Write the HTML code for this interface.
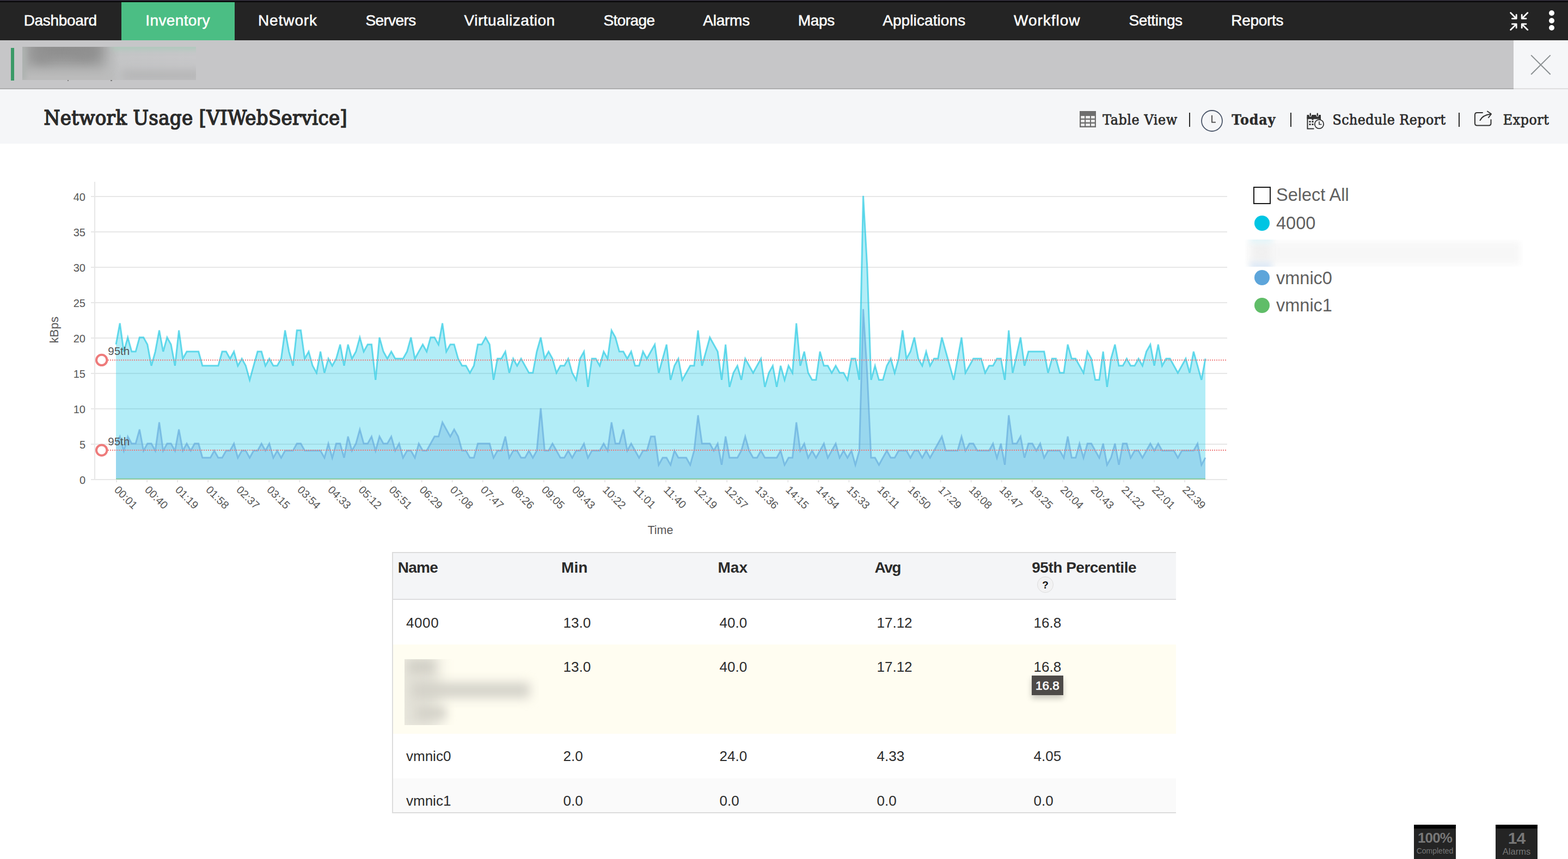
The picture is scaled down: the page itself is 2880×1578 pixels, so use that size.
<!DOCTYPE html>
<html><head><meta charset="utf-8"><title>Network Usage</title>
<style>
html,body{margin:0;padding:0}
body{width:2880px;height:1578px;overflow:hidden;background:#fff;position:relative;font-family:"Liberation Sans",sans-serif;color:#2b2b2b}
.abs{position:absolute}
#strip{left:0;top:0;width:2880px;height:4px;background:linear-gradient(#2c2934 0,#2c2934 55%,#050505 55%)}
#nav{left:0;top:4px;width:2880px;height:70px;background:#242424}
#nav .act{position:absolute;left:223px;top:0;width:208px;height:70px;background:#4bbe84}
#nav span{position:absolute;top:0;line-height:68px;font-size:28px;color:#fff;white-space:nowrap;-webkit-text-stroke:0.5px #fff}
#gbar{left:0;top:74px;width:2780px;height:88px;background:#c6c6c8;border-bottom:2px solid #adadae}
#closep{left:2780px;top:74px;width:100px;height:88px;background:#f5f6f8;border-bottom:2px solid #dededf}
#tbar{left:0;top:164px;width:2880px;height:100px;background:#f5f6f8}
.serif{font-family:"DejaVu Serif Condensed","DejaVu Serif","Liberation Serif",serif}
#title{left:80.5px;top:186px;-webkit-text-stroke:1.5px #2b2b2b;font-size:38px;line-height:60px;white-space:nowrap;color:#2b2b2b;letter-spacing:0.27px}
.tool{top:199.5px;-webkit-text-stroke:0.7px #2b2b2b;font-size:26.5px;line-height:40px;white-space:nowrap;color:#2b2b2b}
.sep{top:207px;width:2px;height:26px;background:#2b2b2b}
.chart{position:absolute;left:0;top:264px}
.leg{font-size:32.5px;color:#606060;line-height:40px;white-space:nowrap}
.dot{width:28px;height:28px;border-radius:50%}
</style></head><body>
<div id="strip" class="abs"></div>
<div id="nav" class="abs"><div class="act"></div>
<span style="left:43.7px;letter-spacing:-0.31px">Dashboard</span>
<span style="left:267.3px;letter-spacing:0.37px">Inventory</span>
<span style="left:474.0px;letter-spacing:0.90px">Network</span>
<span style="left:671.4px;letter-spacing:-0.60px">Servers</span>
<span style="left:852.5px;letter-spacing:0.53px">Virtualization</span>
<span style="left:1108.5px;letter-spacing:-0.58px">Storage</span>
<span style="left:1291.3px;letter-spacing:-0.25px">Alarms</span>
<span style="left:1465.8px;letter-spacing:-0.35px">Maps</span>
<span style="left:1621.2px;letter-spacing:0.09px">Applications</span>
<span style="left:1862.1px;letter-spacing:0.98px">Workflow</span>
<span style="left:2073.4px;letter-spacing:-0.35px">Settings</span>
<span style="left:2261.2px;letter-spacing:-0.27px">Reports</span>
<svg class="abs" style="left:2772px;top:17px" width="36" height="36" viewBox="0 0 36 36" fill="none" stroke="#fff" stroke-width="2.8" stroke-linecap="round" stroke-linejoin="round">
<path d="M2.6,2.6 L13,13 M13.2,6.2 V13.2 H5.4"/><path d="M33.8,2.6 L23.4,13 M23.2,6.2 V13.2 H31"/><path d="M2.6,33.8 L13,23.4 M13.2,30.2 V23.2 H5.4"/><path d="M33.8,33.8 L23.4,23.4 M23.2,30.2 V23.2 H31"/></svg>
<div class="abs" style="left:2845px;top:15.2px;width:10px;height:10px;border-radius:50%;background:#fff"></div>
<div class="abs" style="left:2845px;top:28.9px;width:10px;height:10px;border-radius:50%;background:#fff"></div>
<div class="abs" style="left:2845px;top:42.4px;width:10px;height:10px;border-radius:50%;background:#fff"></div>
</div>
<div id="gbar" class="abs">
 <div class="abs" style="left:20px;top:14px;width:6px;height:60px;background:#3a9a67"></div>
 <div class="abs" style="left:41px;top:12px;width:319px;height:61px;overflow:hidden;background:linear-gradient(90deg,#b0b1b1 0,#b1b2b2 44%,#c4c5c6 56%,#c7c7c9 100%)">
  <div class="abs" style="left:14px;top:-18px;width:132px;height:48px;background:#8d8d8d;filter:blur(14px)"></div>
  <div class="abs" style="left:20px;top:8px;width:30px;height:20px;background:#939393;filter:blur(10px)"></div>
  <div class="abs" style="left:96px;top:2px;width:40px;height:18px;background:#909090;filter:blur(10px)"></div>
  <div class="abs" style="left:-14px;top:46px;width:180px;height:30px;background:#bdbdbd;filter:blur(10px)"></div>
  <div class="abs" style="left:165px;top:-9px;width:175px;height:13px;background:#a9cab9;filter:blur(6px)"></div>
  <div class="abs" style="left:182px;top:43px;width:150px;height:20px;background:#b4b4b5;filter:blur(9px)"></div>
  <div class="abs" style="left:-7px;top:0;width:13px;height:61px;background:#adb3b0;filter:blur(4px)"></div>
 </div>
 <div class="abs" style="left:123.5px;top:73px;width:2.5px;height:1.5px;background:#7d7d7d"></div>
 <div class="abs" style="left:203px;top:73px;width:2.5px;height:1.5px;background:#7d7d7d"></div>
</div>
<div id="closep" class="abs"><svg class="abs" style="left:30px;top:25px" width="40" height="40" viewBox="0 0 40 40"><path d="M2.2,2.4 L37.7,37.7 M37.7,2.4 L2.2,37.7" stroke="#8a8f91" stroke-width="2" fill="none"/></svg></div>
<div id="tbar" class="abs"></div>
<div id="title" class="abs serif">Network Usage [VIWebService]</div>
<div class="abs serif tool" style="left:2025.2px;letter-spacing:0.60px">Table View</div>
<div class="abs serif tool" style="left:2262.3px;font-weight:bold;-webkit-text-stroke:0.4px #2b2b2b;letter-spacing:0.88px">Today</div>
<div class="abs serif tool" style="left:2447.5px;letter-spacing:0.42px">Schedule Report</div>
<div class="abs serif tool" style="left:2760.8px;letter-spacing:0.53px">Export</div>
<div class="abs sep" style="left:2183.5px"></div><div class="abs sep" style="left:2369.7px"></div><div class="abs sep" style="left:2678.9px"></div>
<svg class="abs" style="left:1983px;top:204px" width="30" height="30" viewBox="0 0 30 30"><rect width="30" height="30" fill="#6e6e6e"/><g fill="#eeeeee">
<rect x="2.3" y="9" width="6.8" height="4.6"/><rect x="11.2" y="9" width="7.8" height="4.6"/><rect x="21" y="9" width="6.8" height="4.6"/>
<rect x="2.3" y="16" width="6.8" height="4.6"/><rect x="11.2" y="16" width="7.8" height="4.6"/><rect x="21" y="16" width="6.8" height="4.6"/>
<rect x="2.3" y="23" width="6.8" height="4.6"/><rect x="11.2" y="23" width="7.8" height="4.6"/><rect x="21" y="23" width="6.8" height="4.6"/></g></svg>
<svg class="abs" style="left:2204px;top:199.6px" width="44" height="44" viewBox="0 0 44 44" fill="none"><circle cx="22" cy="22" r="19" stroke="#4b5669" stroke-width="1.8"/><path d="M22,11.7 V24.6 H28.9" stroke="#444" stroke-width="1.8"/></svg>
<svg class="abs" style="left:2399px;top:205px" width="36" height="36" viewBox="0 0 36 36" fill="none">
<path d="M1.5,9 h25.5 v8 h-2 v-3.5 h-21.500 v17 h11 v2 h-13 z" fill="#333"/>
<rect x="1.500" y="6" width="25.500" height="7.500" fill="#333"/>
<rect x="6" y="2" width="3.600" height="7" rx="1.800" fill="#333" stroke="#f5f6f8" stroke-width="1.200"/><rect x="19" y="2" width="3.600" height="7" rx="1.800" fill="#333" stroke="#f5f6f8" stroke-width="1.200"/>
<g fill="#333"><rect x="5.500" y="17" width="3" height="3"/><rect x="10.500" y="17" width="3" height="3"/><rect x="10.500" y="12.500" width="3" height="3"/><rect x="5.500" y="22" width="3" height="3"/><rect x="10.500" y="22" width="3" height="3"/></g>
<circle cx="24" cy="23" r="8.200" fill="#f5f6f8" stroke="#333" stroke-width="1.800"/><path d="M24,18 v5.500 h4.500" stroke="#333" stroke-width="1.600"/></svg>
<svg class="abs" style="left:2706px;top:202px" width="38" height="32" viewBox="0 0 38 32" fill="none" stroke="#333" stroke-width="2" stroke-linecap="round" stroke-linejoin="round">
<path d="M17,5 H7 Q3,5 3,9 V24.500 Q3,28.500 7,28.500 H28.500 Q32.500,28.500 32.500,24.500 V18"/><path d="M12.500,19 Q17,9.500 32,7.500"/><path d="M26,2.500 L33,7.300 L28,14"/></svg>
<svg class="chart" width="2300" height="760" viewBox="0 0 2300 760" font-family="'Liberation Sans', sans-serif">
<rect x="167" y="616" width="2087" height="2" fill="#e7e7e7"/>
<text x="157" y="624.7" text-anchor="end" font-size="20" fill="#575757">0</text>
<rect x="167" y="551" width="2087" height="2" fill="#e7e7e7"/>
<text x="157" y="559.7" text-anchor="end" font-size="20" fill="#575757">5</text>
<rect x="167" y="486" width="2087" height="2" fill="#e7e7e7"/>
<text x="157" y="494.7" text-anchor="end" font-size="20" fill="#575757">10</text>
<rect x="167" y="421" width="2087" height="2" fill="#e7e7e7"/>
<text x="157" y="429.7" text-anchor="end" font-size="20" fill="#575757">15</text>
<rect x="167" y="356" width="2087" height="2" fill="#e7e7e7"/>
<text x="157" y="364.7" text-anchor="end" font-size="20" fill="#575757">20</text>
<rect x="167" y="291" width="2087" height="2" fill="#e7e7e7"/>
<text x="157" y="299.7" text-anchor="end" font-size="20" fill="#575757">25</text>
<rect x="167" y="226" width="2087" height="2" fill="#e7e7e7"/>
<text x="157" y="234.7" text-anchor="end" font-size="20" fill="#575757">30</text>
<rect x="167" y="161" width="2087" height="2" fill="#e7e7e7"/>
<text x="157" y="169.7" text-anchor="end" font-size="20" fill="#575757">35</text>
<rect x="167" y="96" width="2087" height="2" fill="#e7e7e7"/>
<text x="157" y="104.7" text-anchor="end" font-size="20" fill="#575757">40</text>
<rect x="173" y="70" width="2" height="548" fill="#e7e7e7"/>
<rect x="213.0" y="618" width="2" height="4" fill="#e7e7e7"/>
<text transform="translate(208.7,637) rotate(45)" font-size="20" fill="#575757">00:01</text>
<rect x="269.1" y="618" width="2" height="4" fill="#e7e7e7"/>
<text transform="translate(264.8,637) rotate(45)" font-size="20" fill="#575757">00:40</text>
<rect x="325.1" y="618" width="2" height="4" fill="#e7e7e7"/>
<text transform="translate(320.8,637) rotate(45)" font-size="20" fill="#575757">01:19</text>
<rect x="381.2" y="618" width="2" height="4" fill="#e7e7e7"/>
<text transform="translate(376.9,637) rotate(45)" font-size="20" fill="#575757">01:58</text>
<rect x="437.2" y="618" width="2" height="4" fill="#e7e7e7"/>
<text transform="translate(432.9,637) rotate(45)" font-size="20" fill="#575757">02:37</text>
<rect x="493.3" y="618" width="2" height="4" fill="#e7e7e7"/>
<text transform="translate(489.0,637) rotate(45)" font-size="20" fill="#575757">03:15</text>
<rect x="549.4" y="618" width="2" height="4" fill="#e7e7e7"/>
<text transform="translate(545.1,637) rotate(45)" font-size="20" fill="#575757">03:54</text>
<rect x="605.4" y="618" width="2" height="4" fill="#e7e7e7"/>
<text transform="translate(601.1,637) rotate(45)" font-size="20" fill="#575757">04:33</text>
<rect x="661.5" y="618" width="2" height="4" fill="#e7e7e7"/>
<text transform="translate(657.2,637) rotate(45)" font-size="20" fill="#575757">05:12</text>
<rect x="717.5" y="618" width="2" height="4" fill="#e7e7e7"/>
<text transform="translate(713.2,637) rotate(45)" font-size="20" fill="#575757">05:51</text>
<rect x="773.6" y="618" width="2" height="4" fill="#e7e7e7"/>
<text transform="translate(769.3,637) rotate(45)" font-size="20" fill="#575757">06:29</text>
<rect x="829.7" y="618" width="2" height="4" fill="#e7e7e7"/>
<text transform="translate(825.4,637) rotate(45)" font-size="20" fill="#575757">07:08</text>
<rect x="885.7" y="618" width="2" height="4" fill="#e7e7e7"/>
<text transform="translate(881.4,637) rotate(45)" font-size="20" fill="#575757">07:47</text>
<rect x="941.8" y="618" width="2" height="4" fill="#e7e7e7"/>
<text transform="translate(937.5,637) rotate(45)" font-size="20" fill="#575757">08:26</text>
<rect x="997.8" y="618" width="2" height="4" fill="#e7e7e7"/>
<text transform="translate(993.5,637) rotate(45)" font-size="20" fill="#575757">09:05</text>
<rect x="1053.9" y="618" width="2" height="4" fill="#e7e7e7"/>
<text transform="translate(1049.6,637) rotate(45)" font-size="20" fill="#575757">09:43</text>
<rect x="1110.0" y="618" width="2" height="4" fill="#e7e7e7"/>
<text transform="translate(1105.7,637) rotate(45)" font-size="20" fill="#575757">10:22</text>
<rect x="1166.0" y="618" width="2" height="4" fill="#e7e7e7"/>
<text transform="translate(1161.7,637) rotate(45)" font-size="20" fill="#575757">11:01</text>
<rect x="1222.1" y="618" width="2" height="4" fill="#e7e7e7"/>
<text transform="translate(1217.8,637) rotate(45)" font-size="20" fill="#575757">11:40</text>
<rect x="1278.1" y="618" width="2" height="4" fill="#e7e7e7"/>
<text transform="translate(1273.8,637) rotate(45)" font-size="20" fill="#575757">12:19</text>
<rect x="1334.2" y="618" width="2" height="4" fill="#e7e7e7"/>
<text transform="translate(1329.9,637) rotate(45)" font-size="20" fill="#575757">12:57</text>
<rect x="1390.3" y="618" width="2" height="4" fill="#e7e7e7"/>
<text transform="translate(1386.0,637) rotate(45)" font-size="20" fill="#575757">13:36</text>
<rect x="1446.3" y="618" width="2" height="4" fill="#e7e7e7"/>
<text transform="translate(1442.0,637) rotate(45)" font-size="20" fill="#575757">14:15</text>
<rect x="1502.4" y="618" width="2" height="4" fill="#e7e7e7"/>
<text transform="translate(1498.1,637) rotate(45)" font-size="20" fill="#575757">14:54</text>
<rect x="1558.4" y="618" width="2" height="4" fill="#e7e7e7"/>
<text transform="translate(1554.1,637) rotate(45)" font-size="20" fill="#575757">15:33</text>
<rect x="1614.5" y="618" width="2" height="4" fill="#e7e7e7"/>
<text transform="translate(1610.2,637) rotate(45)" font-size="20" fill="#575757">16:11</text>
<rect x="1670.6" y="618" width="2" height="4" fill="#e7e7e7"/>
<text transform="translate(1666.3,637) rotate(45)" font-size="20" fill="#575757">16:50</text>
<rect x="1726.6" y="618" width="2" height="4" fill="#e7e7e7"/>
<text transform="translate(1722.3,637) rotate(45)" font-size="20" fill="#575757">17:29</text>
<rect x="1782.7" y="618" width="2" height="4" fill="#e7e7e7"/>
<text transform="translate(1778.4,637) rotate(45)" font-size="20" fill="#575757">18:08</text>
<rect x="1838.7" y="618" width="2" height="4" fill="#e7e7e7"/>
<text transform="translate(1834.4,637) rotate(45)" font-size="20" fill="#575757">18:47</text>
<rect x="1894.8" y="618" width="2" height="4" fill="#e7e7e7"/>
<text transform="translate(1890.5,637) rotate(45)" font-size="20" fill="#575757">19:25</text>
<rect x="1950.9" y="618" width="2" height="4" fill="#e7e7e7"/>
<text transform="translate(1946.6,637) rotate(45)" font-size="20" fill="#575757">20:04</text>
<rect x="2006.9" y="618" width="2" height="4" fill="#e7e7e7"/>
<text transform="translate(2002.6,637) rotate(45)" font-size="20" fill="#575757">20:43</text>
<rect x="2063.0" y="618" width="2" height="4" fill="#e7e7e7"/>
<text transform="translate(2058.7,637) rotate(45)" font-size="20" fill="#575757">21:22</text>
<rect x="2119.0" y="618" width="2" height="4" fill="#e7e7e7"/>
<text transform="translate(2114.7,637) rotate(45)" font-size="20" fill="#575757">22:01</text>
<rect x="2175.1" y="618" width="2" height="4" fill="#e7e7e7"/>
<text transform="translate(2170.8,637) rotate(45)" font-size="20" fill="#575757">22:39</text>
<path d="M213.0,368.8 L220.2,329.8 L227.4,381.8 L234.7,355.8 L241.9,381.8 L249.1,381.8 L256.3,355.8 L263.6,355.8 L270.8,368.8 L278.0,407.8 L285.2,381.8 L292.5,342.8 L299.7,381.8 L306.9,355.8 L314.1,368.8 L321.4,407.8 L328.6,342.8 L335.8,394.8 L343.0,381.8 L350.3,381.8 L357.5,381.8 L364.7,381.8 L371.9,407.8 L379.1,407.8 L386.4,407.8 L393.6,407.8 L400.8,407.8 L408.0,381.8 L415.3,381.8 L422.5,394.8 L429.7,381.8 L436.9,407.8 L444.2,394.8 L451.4,407.8 L458.6,433.8 L465.8,407.8 L473.1,381.8 L480.3,381.8 L487.5,407.8 L494.7,394.8 L502.0,407.8 L509.2,407.8 L516.4,394.8 L523.6,342.8 L530.8,381.8 L538.1,407.8 L545.3,342.8 L552.5,342.8 L559.7,394.8 L567.0,381.8 L574.2,407.8 L581.4,420.8 L588.6,381.8 L595.9,420.8 L603.1,394.8 L610.3,407.8 L617.5,394.8 L624.8,368.8 L632.0,407.8 L639.2,368.8 L646.4,394.8 L653.7,381.8 L660.9,355.8 L668.1,381.8 L675.3,368.8 L682.5,368.8 L689.8,433.8 L697.0,355.8 L704.2,381.8 L711.4,394.8 L718.7,381.8 L725.9,394.8 L733.1,394.8 L740.3,394.8 L747.6,381.8 L754.8,355.8 L762.0,394.8 L769.2,381.8 L776.5,368.8 L783.7,381.8 L790.9,355.8 L798.1,355.8 L805.4,368.8 L812.6,329.8 L819.8,381.8 L827.0,368.8 L834.2,368.8 L841.5,394.8 L848.7,407.8 L855.9,407.8 L863.1,420.8 L870.4,407.8 L877.6,368.8 L884.8,368.8 L892.0,355.8 L899.3,368.8 L906.5,433.8 L913.7,394.8 L920.9,394.8 L928.2,381.8 L935.4,420.8 L942.6,394.8 L949.8,407.8 L957.1,394.8 L964.3,407.8 L971.5,420.8 L978.7,420.8 L985.9,381.8 L993.2,355.8 L1000.4,394.8 L1007.6,381.8 L1014.8,394.8 L1022.1,420.8 L1029.3,407.8 L1036.5,407.8 L1043.7,394.8 L1051.0,420.8 L1058.2,433.8 L1065.4,394.8 L1072.6,381.8 L1079.9,446.8 L1087.1,394.8 L1094.3,394.8 L1101.5,407.8 L1108.8,381.8 L1116.0,394.8 L1123.2,342.8 L1130.4,355.8 L1137.6,381.8 L1144.9,381.8 L1152.1,394.8 L1159.3,381.8 L1166.5,407.8 L1173.8,407.8 L1181.0,381.8 L1188.2,394.8 L1195.4,381.8 L1202.7,368.8 L1209.9,420.8 L1217.1,394.8 L1224.3,368.8 L1231.6,433.8 L1238.8,407.8 L1246.0,394.8 L1253.2,433.8 L1260.5,420.8 L1267.7,407.8 L1274.9,407.8 L1282.1,342.8 L1289.4,407.8 L1296.6,381.8 L1303.8,355.8 L1311.0,368.8 L1318.2,381.8 L1325.5,433.8 L1332.7,368.8 L1339.9,446.8 L1347.1,420.8 L1354.4,407.8 L1361.6,433.8 L1368.8,394.8 L1376.0,407.8 L1383.3,420.8 L1390.5,407.8 L1397.7,394.8 L1404.9,446.8 L1412.2,420.8 L1419.4,407.8 L1426.6,446.8 L1433.8,407.8 L1441.1,433.8 L1448.3,407.8 L1455.5,420.8 L1462.7,329.8 L1469.9,407.8 L1477.2,381.8 L1484.4,420.8 L1491.6,433.8 L1498.8,433.8 L1506.1,381.8 L1513.3,407.8 L1520.5,407.8 L1527.7,420.8 L1535.0,407.8 L1542.2,420.8 L1549.4,420.8 L1556.6,433.8 L1563.9,394.8 L1571.1,394.8 L1578.3,433.8 L1585.5,95.8 L1592.8,225.8 L1600.0,433.8 L1607.2,407.8 L1614.4,433.8 L1621.6,433.8 L1628.9,407.8 L1636.1,394.8 L1643.3,420.8 L1650.5,394.8 L1657.8,342.8 L1665.0,394.8 L1672.2,381.8 L1679.4,355.8 L1686.7,394.8 L1693.9,407.8 L1701.1,381.8 L1708.3,407.8 L1715.6,394.8 L1722.8,394.8 L1730.0,355.8 L1737.2,381.8 L1744.5,407.8 L1751.7,433.8 L1758.9,394.8 L1766.1,355.8 L1773.3,420.8 L1780.6,407.8 L1787.8,394.8 L1795.0,394.8 L1802.2,394.8 L1809.5,420.8 L1816.7,407.8 L1823.9,407.8 L1831.1,394.8 L1838.4,394.8 L1845.6,433.8 L1852.8,342.8 L1860.0,420.8 L1867.3,388.3 L1874.5,355.8 L1881.7,407.8 L1888.9,381.8 L1896.2,381.8 L1903.4,381.8 L1910.6,381.8 L1917.8,381.8 L1925.0,420.8 L1932.3,394.8 L1939.5,394.8 L1946.7,420.8 L1953.9,420.8 L1961.2,368.8 L1968.4,394.8 L1975.6,394.8 L1982.8,407.8 L1990.1,420.8 L1997.3,381.8 L2004.5,394.8 L2011.7,433.8 L2019.0,433.8 L2026.2,381.8 L2033.4,446.8 L2040.6,394.8 L2047.9,368.8 L2055.1,407.8 L2062.3,407.8 L2069.5,394.8 L2076.7,407.8 L2084.0,407.8 L2091.2,394.8 L2098.4,407.8 L2105.6,381.8 L2112.9,368.8 L2120.1,407.8 L2127.3,368.8 L2134.5,407.8 L2141.8,394.8 L2149.0,394.8 L2156.2,407.8 L2163.4,420.8 L2170.7,407.8 L2177.9,394.8 L2185.1,420.8 L2192.3,381.8 L2199.6,407.8 L2206.8,433.8 L2214.0,394.8 L2214.0,615.8 L213.0,615.8 Z" fill="#00c5e3" fill-opacity="0.3"/>
<path d="M213.0,368.8 L220.2,329.8 L227.4,381.8 L234.7,355.8 L241.9,381.8 L249.1,381.8 L256.3,355.8 L263.6,355.8 L270.8,368.8 L278.0,407.8 L285.2,381.8 L292.5,342.8 L299.7,381.8 L306.9,355.8 L314.1,368.8 L321.4,407.8 L328.6,342.8 L335.8,394.8 L343.0,381.8 L350.3,381.8 L357.5,381.8 L364.7,381.8 L371.9,407.8 L379.1,407.8 L386.4,407.8 L393.6,407.8 L400.8,407.8 L408.0,381.8 L415.3,381.8 L422.5,394.8 L429.7,381.8 L436.9,407.8 L444.2,394.8 L451.4,407.8 L458.6,433.8 L465.8,407.8 L473.1,381.8 L480.3,381.8 L487.5,407.8 L494.7,394.8 L502.0,407.8 L509.2,407.8 L516.4,394.8 L523.6,342.8 L530.8,381.8 L538.1,407.8 L545.3,342.8 L552.5,342.8 L559.7,394.8 L567.0,381.8 L574.2,407.8 L581.4,420.8 L588.6,381.8 L595.9,420.8 L603.1,394.8 L610.3,407.8 L617.5,394.8 L624.8,368.8 L632.0,407.8 L639.2,368.8 L646.4,394.8 L653.7,381.8 L660.9,355.8 L668.1,381.8 L675.3,368.8 L682.5,368.8 L689.8,433.8 L697.0,355.8 L704.2,381.8 L711.4,394.8 L718.7,381.8 L725.9,394.8 L733.1,394.8 L740.3,394.8 L747.6,381.8 L754.8,355.8 L762.0,394.8 L769.2,381.8 L776.5,368.8 L783.7,381.8 L790.9,355.8 L798.1,355.8 L805.4,368.8 L812.6,329.8 L819.8,381.8 L827.0,368.8 L834.2,368.8 L841.5,394.8 L848.7,407.8 L855.9,407.8 L863.1,420.8 L870.4,407.8 L877.6,368.8 L884.8,368.8 L892.0,355.8 L899.3,368.8 L906.5,433.8 L913.7,394.8 L920.9,394.8 L928.2,381.8 L935.4,420.8 L942.6,394.8 L949.8,407.8 L957.1,394.8 L964.3,407.8 L971.5,420.8 L978.7,420.8 L985.9,381.8 L993.2,355.8 L1000.4,394.8 L1007.6,381.8 L1014.8,394.8 L1022.1,420.8 L1029.3,407.8 L1036.5,407.8 L1043.7,394.8 L1051.0,420.8 L1058.2,433.8 L1065.4,394.8 L1072.6,381.8 L1079.9,446.8 L1087.1,394.8 L1094.3,394.8 L1101.5,407.8 L1108.8,381.8 L1116.0,394.8 L1123.2,342.8 L1130.4,355.8 L1137.6,381.8 L1144.9,381.8 L1152.1,394.8 L1159.3,381.8 L1166.5,407.8 L1173.8,407.8 L1181.0,381.8 L1188.2,394.8 L1195.4,381.8 L1202.7,368.8 L1209.9,420.8 L1217.1,394.8 L1224.3,368.8 L1231.6,433.8 L1238.8,407.8 L1246.0,394.8 L1253.2,433.8 L1260.5,420.8 L1267.7,407.8 L1274.9,407.8 L1282.1,342.8 L1289.4,407.8 L1296.6,381.8 L1303.8,355.8 L1311.0,368.8 L1318.2,381.8 L1325.5,433.8 L1332.7,368.8 L1339.9,446.8 L1347.1,420.8 L1354.4,407.8 L1361.6,433.8 L1368.8,394.8 L1376.0,407.8 L1383.3,420.8 L1390.5,407.8 L1397.7,394.8 L1404.9,446.8 L1412.2,420.8 L1419.4,407.8 L1426.6,446.8 L1433.8,407.8 L1441.1,433.8 L1448.3,407.8 L1455.5,420.8 L1462.7,329.8 L1469.9,407.8 L1477.2,381.8 L1484.4,420.8 L1491.6,433.8 L1498.8,433.8 L1506.1,381.8 L1513.3,407.8 L1520.5,407.8 L1527.7,420.8 L1535.0,407.8 L1542.2,420.8 L1549.4,420.8 L1556.6,433.8 L1563.9,394.8 L1571.1,394.8 L1578.3,433.8 L1585.5,95.8 L1592.8,225.8 L1600.0,433.8 L1607.2,407.8 L1614.4,433.8 L1621.6,433.8 L1628.9,407.8 L1636.1,394.8 L1643.3,420.8 L1650.5,394.8 L1657.8,342.8 L1665.0,394.8 L1672.2,381.8 L1679.4,355.8 L1686.7,394.8 L1693.9,407.8 L1701.1,381.8 L1708.3,407.8 L1715.6,394.8 L1722.8,394.8 L1730.0,355.8 L1737.2,381.8 L1744.5,407.8 L1751.7,433.8 L1758.9,394.8 L1766.1,355.8 L1773.3,420.8 L1780.6,407.8 L1787.8,394.8 L1795.0,394.8 L1802.2,394.8 L1809.5,420.8 L1816.7,407.8 L1823.9,407.8 L1831.1,394.8 L1838.4,394.8 L1845.6,433.8 L1852.8,342.8 L1860.0,420.8 L1867.3,388.3 L1874.5,355.8 L1881.7,407.8 L1888.9,381.8 L1896.2,381.8 L1903.4,381.8 L1910.6,381.8 L1917.8,381.8 L1925.0,420.8 L1932.3,394.8 L1939.5,394.8 L1946.7,420.8 L1953.9,420.8 L1961.2,368.8 L1968.4,394.8 L1975.6,394.8 L1982.8,407.8 L1990.1,420.8 L1997.3,381.8 L2004.5,394.8 L2011.7,433.8 L2019.0,433.8 L2026.2,381.8 L2033.4,446.8 L2040.6,394.8 L2047.9,368.8 L2055.1,407.8 L2062.3,407.8 L2069.5,394.8 L2076.7,407.8 L2084.0,407.8 L2091.2,394.8 L2098.4,407.8 L2105.6,381.8 L2112.9,368.8 L2120.1,407.8 L2127.3,368.8 L2134.5,407.8 L2141.8,394.8 L2149.0,394.8 L2156.2,407.8 L2163.4,420.8 L2170.7,407.8 L2177.9,394.8 L2185.1,420.8 L2192.3,381.8 L2199.6,407.8 L2206.8,433.8 L2214.0,394.8" fill="none" stroke="#22c9e2" stroke-opacity="0.66" stroke-width="3"/>
<path d="M213.0,550.8 L220.2,537.8 L227.4,563.8 L234.7,537.8 L241.9,550.8 L249.1,550.8 L256.3,524.8 L263.6,563.8 L270.8,550.8 L278.0,550.8 L285.2,563.8 L292.5,511.8 L299.7,563.8 L306.9,550.8 L314.1,550.8 L321.4,563.8 L328.6,524.8 L335.8,563.8 L343.0,550.8 L350.3,563.8 L357.5,550.8 L364.7,550.8 L371.9,576.8 L379.1,576.8 L386.4,576.8 L393.6,563.8 L400.8,576.8 L408.0,576.8 L415.3,563.8 L422.5,563.8 L429.7,550.8 L436.9,576.8 L444.2,563.8 L451.4,563.8 L458.6,576.8 L465.8,563.8 L473.1,563.8 L480.3,550.8 L487.5,563.8 L494.7,550.8 L502.0,576.8 L509.2,563.8 L516.4,576.8 L523.6,563.8 L530.8,563.8 L538.1,563.8 L545.3,550.8 L552.5,550.8 L559.7,563.8 L567.0,563.8 L574.2,563.8 L581.4,563.8 L588.6,563.8 L595.9,576.8 L603.1,550.8 L610.3,576.8 L617.5,550.8 L624.8,550.8 L632.0,576.8 L639.2,537.8 L646.4,563.8 L653.7,550.8 L660.9,524.8 L668.1,550.8 L675.3,550.8 L682.5,537.8 L689.8,563.8 L697.0,537.8 L704.2,550.8 L711.4,550.8 L718.7,537.8 L725.9,563.8 L733.1,550.8 L740.3,576.8 L747.6,563.8 L754.8,563.8 L762.0,576.8 L769.2,550.8 L776.5,563.8 L783.7,563.8 L790.9,550.8 L798.1,537.8 L805.4,537.8 L812.6,511.8 L819.8,524.8 L827.0,537.8 L834.2,524.8 L841.5,537.8 L848.7,563.8 L855.9,563.8 L863.1,576.8 L870.4,576.8 L877.6,550.8 L884.8,550.8 L892.0,550.8 L899.3,550.8 L906.5,576.8 L913.7,563.8 L920.9,563.8 L928.2,537.8 L935.4,576.8 L942.6,563.8 L949.8,563.8 L957.1,576.8 L964.3,576.8 L971.5,563.8 L978.7,576.8 L985.9,563.8 L993.2,485.8 L1000.4,563.8 L1007.6,563.8 L1014.8,550.8 L1022.1,563.8 L1029.3,576.8 L1036.5,576.8 L1043.7,563.8 L1051.0,576.8 L1058.2,563.8 L1065.4,563.8 L1072.6,550.8 L1079.9,576.8 L1087.1,563.8 L1094.3,563.8 L1101.5,563.8 L1108.8,550.8 L1116.0,563.8 L1123.2,511.8 L1130.4,550.8 L1137.6,550.8 L1144.9,524.8 L1152.1,563.8 L1159.3,550.8 L1166.5,563.8 L1173.8,576.8 L1181.0,563.8 L1188.2,563.8 L1195.4,537.8 L1202.7,537.8 L1209.9,589.8 L1217.1,576.8 L1224.3,576.8 L1231.6,589.8 L1238.8,563.8 L1246.0,576.8 L1253.2,576.8 L1260.5,576.8 L1267.7,589.8 L1274.9,563.8 L1282.1,498.8 L1289.4,550.8 L1296.6,550.8 L1303.8,550.8 L1311.0,563.8 L1318.2,550.8 L1325.5,589.8 L1332.7,537.8 L1339.9,576.8 L1347.1,576.8 L1354.4,576.8 L1361.6,563.8 L1368.8,537.8 L1376.0,563.8 L1383.3,576.8 L1390.5,576.8 L1397.7,563.8 L1404.9,576.8 L1412.2,576.8 L1419.4,576.8 L1426.6,576.8 L1433.8,563.8 L1441.1,589.8 L1448.3,576.8 L1455.5,576.8 L1462.7,511.8 L1469.9,563.8 L1477.2,550.8 L1484.4,576.8 L1491.6,563.8 L1498.8,576.8 L1506.1,563.8 L1513.3,550.8 L1520.5,576.8 L1527.7,563.8 L1535.0,550.8 L1542.2,576.8 L1549.4,563.8 L1556.6,576.8 L1563.9,563.8 L1571.1,589.8 L1578.3,563.8 L1585.5,303.8 L1592.8,420.8 L1600.0,576.8 L1607.2,576.8 L1614.4,589.8 L1621.6,576.8 L1628.9,563.8 L1636.1,576.8 L1643.3,576.8 L1650.5,563.8 L1657.8,563.8 L1665.0,563.8 L1672.2,576.8 L1679.4,563.8 L1686.7,563.8 L1693.9,576.8 L1701.1,563.8 L1708.3,576.8 L1715.6,563.8 L1722.8,550.8 L1730.0,537.8 L1737.2,563.8 L1744.5,563.8 L1751.7,563.8 L1758.9,563.8 L1766.1,537.8 L1773.3,563.8 L1780.6,550.8 L1787.8,550.8 L1795.0,563.8 L1802.2,563.8 L1809.5,563.8 L1816.7,563.8 L1823.9,550.8 L1831.1,576.8 L1838.4,550.8 L1845.6,589.8 L1852.8,498.8 L1860.0,550.8 L1867.3,550.8 L1874.5,537.8 L1881.7,576.8 L1888.9,550.8 L1896.2,550.8 L1903.4,563.8 L1910.6,550.8 L1917.8,576.8 L1925.0,563.8 L1932.3,563.8 L1939.5,563.8 L1946.7,563.8 L1953.9,576.8 L1961.2,537.8 L1968.4,576.8 L1975.6,576.8 L1982.8,550.8 L1990.1,576.8 L1997.3,550.8 L2004.5,550.8 L2011.7,563.8 L2019.0,576.8 L2026.2,550.8 L2033.4,589.8 L2040.6,576.8 L2047.9,550.8 L2055.1,589.8 L2062.3,550.8 L2069.5,550.8 L2076.7,576.8 L2084.0,563.8 L2091.2,563.8 L2098.4,576.8 L2105.6,563.8 L2112.9,550.8 L2120.1,563.8 L2127.3,550.8 L2134.5,563.8 L2141.8,563.8 L2149.0,563.8 L2156.2,563.8 L2163.4,576.8 L2170.7,563.8 L2177.9,563.8 L2185.1,563.8 L2192.3,563.8 L2199.6,550.8 L2206.8,589.8 L2214.0,576.8 L2214.0,615.8 L213.0,615.8 Z" fill="#5da5da" fill-opacity="0.3"/>
<path d="M213.0,550.8 L220.2,537.8 L227.4,563.8 L234.7,537.8 L241.9,550.8 L249.1,550.8 L256.3,524.8 L263.6,563.8 L270.8,550.8 L278.0,550.8 L285.2,563.8 L292.5,511.8 L299.7,563.8 L306.9,550.8 L314.1,550.8 L321.4,563.8 L328.6,524.8 L335.8,563.8 L343.0,550.8 L350.3,563.8 L357.5,550.8 L364.7,550.8 L371.9,576.8 L379.1,576.8 L386.4,576.8 L393.6,563.8 L400.8,576.8 L408.0,576.8 L415.3,563.8 L422.5,563.8 L429.7,550.8 L436.9,576.8 L444.2,563.8 L451.4,563.8 L458.6,576.8 L465.8,563.8 L473.1,563.8 L480.3,550.8 L487.5,563.8 L494.7,550.8 L502.0,576.8 L509.2,563.8 L516.4,576.8 L523.6,563.8 L530.8,563.8 L538.1,563.8 L545.3,550.8 L552.5,550.8 L559.7,563.8 L567.0,563.8 L574.2,563.8 L581.4,563.8 L588.6,563.8 L595.9,576.8 L603.1,550.8 L610.3,576.8 L617.5,550.8 L624.8,550.8 L632.0,576.8 L639.2,537.8 L646.4,563.8 L653.7,550.8 L660.9,524.8 L668.1,550.8 L675.3,550.8 L682.5,537.8 L689.8,563.8 L697.0,537.8 L704.2,550.8 L711.4,550.8 L718.7,537.8 L725.9,563.8 L733.1,550.8 L740.3,576.8 L747.6,563.8 L754.8,563.8 L762.0,576.8 L769.2,550.8 L776.5,563.8 L783.7,563.8 L790.9,550.8 L798.1,537.8 L805.4,537.8 L812.6,511.8 L819.8,524.8 L827.0,537.8 L834.2,524.8 L841.5,537.8 L848.7,563.8 L855.9,563.8 L863.1,576.8 L870.4,576.8 L877.6,550.8 L884.8,550.8 L892.0,550.8 L899.3,550.8 L906.5,576.8 L913.7,563.8 L920.9,563.8 L928.2,537.8 L935.4,576.8 L942.6,563.8 L949.8,563.8 L957.1,576.8 L964.3,576.8 L971.5,563.8 L978.7,576.8 L985.9,563.8 L993.2,485.8 L1000.4,563.8 L1007.6,563.8 L1014.8,550.8 L1022.1,563.8 L1029.3,576.8 L1036.5,576.8 L1043.7,563.8 L1051.0,576.8 L1058.2,563.8 L1065.4,563.8 L1072.6,550.8 L1079.9,576.8 L1087.1,563.8 L1094.3,563.8 L1101.5,563.8 L1108.8,550.8 L1116.0,563.8 L1123.2,511.8 L1130.4,550.8 L1137.6,550.8 L1144.9,524.8 L1152.1,563.8 L1159.3,550.8 L1166.5,563.8 L1173.8,576.8 L1181.0,563.8 L1188.2,563.8 L1195.4,537.8 L1202.7,537.8 L1209.9,589.8 L1217.1,576.8 L1224.3,576.8 L1231.6,589.8 L1238.8,563.8 L1246.0,576.8 L1253.2,576.8 L1260.5,576.8 L1267.7,589.8 L1274.9,563.8 L1282.1,498.8 L1289.4,550.8 L1296.6,550.8 L1303.8,550.8 L1311.0,563.8 L1318.2,550.8 L1325.5,589.8 L1332.7,537.8 L1339.9,576.8 L1347.1,576.8 L1354.4,576.8 L1361.6,563.8 L1368.8,537.8 L1376.0,563.8 L1383.3,576.8 L1390.5,576.8 L1397.7,563.8 L1404.9,576.8 L1412.2,576.8 L1419.4,576.8 L1426.6,576.8 L1433.8,563.8 L1441.1,589.8 L1448.3,576.8 L1455.5,576.8 L1462.7,511.8 L1469.9,563.8 L1477.2,550.8 L1484.4,576.8 L1491.6,563.8 L1498.8,576.8 L1506.1,563.8 L1513.3,550.8 L1520.5,576.8 L1527.7,563.8 L1535.0,550.8 L1542.2,576.8 L1549.4,563.8 L1556.6,576.8 L1563.9,563.8 L1571.1,589.8 L1578.3,563.8 L1585.5,303.8 L1592.8,420.8 L1600.0,576.8 L1607.2,576.8 L1614.4,589.8 L1621.6,576.8 L1628.9,563.8 L1636.1,576.8 L1643.3,576.8 L1650.5,563.8 L1657.8,563.8 L1665.0,563.8 L1672.2,576.8 L1679.4,563.8 L1686.7,563.8 L1693.9,576.8 L1701.1,563.8 L1708.3,576.8 L1715.6,563.8 L1722.8,550.8 L1730.0,537.8 L1737.2,563.8 L1744.5,563.8 L1751.7,563.8 L1758.9,563.8 L1766.1,537.8 L1773.3,563.8 L1780.6,550.8 L1787.8,550.8 L1795.0,563.8 L1802.2,563.8 L1809.5,563.8 L1816.7,563.8 L1823.9,550.8 L1831.1,576.8 L1838.4,550.8 L1845.6,589.8 L1852.8,498.8 L1860.0,550.8 L1867.3,550.8 L1874.5,537.8 L1881.7,576.8 L1888.9,550.8 L1896.2,550.8 L1903.4,563.8 L1910.6,550.8 L1917.8,576.8 L1925.0,563.8 L1932.3,563.8 L1939.5,563.8 L1946.7,563.8 L1953.9,576.8 L1961.2,537.8 L1968.4,576.8 L1975.6,576.8 L1982.8,550.8 L1990.1,576.8 L1997.3,550.8 L2004.5,550.8 L2011.7,563.8 L2019.0,576.8 L2026.2,550.8 L2033.4,589.8 L2040.6,576.8 L2047.9,550.8 L2055.1,589.8 L2062.3,550.8 L2069.5,550.8 L2076.7,576.8 L2084.0,563.8 L2091.2,563.8 L2098.4,576.8 L2105.6,563.8 L2112.9,550.8 L2120.1,563.8 L2127.3,550.8 L2134.5,563.8 L2141.8,563.8 L2149.0,563.8 L2156.2,563.8 L2163.4,576.8 L2170.7,563.8 L2177.9,563.8 L2185.1,563.8 L2192.3,563.8 L2199.6,550.8 L2206.8,589.8 L2214.0,576.8" fill="none" stroke="#5da5da" stroke-opacity="0.6" stroke-width="3"/>
<path d="M213.0,615.8 L2214.0,615.8" stroke="#60bd68" stroke-opacity="0.6" stroke-width="2" fill="none"/>
<path d="M198,397.4 L2253,397.4" stroke="#ef7a7a" stroke-width="2" stroke-dasharray="2 2" fill="none"/>
<circle cx="186.7" cy="397.4" r="9.7" fill="#fff" stroke="#ee7b7b" stroke-width="4"/>
<text x="198.3" y="387.8" font-size="20.5" fill="#555">95th</text>
<path d="M198,563.1 L2253,563.1" stroke="#ef7a7a" stroke-width="2" stroke-dasharray="2 2" fill="none"/>
<circle cx="186.7" cy="563.1" r="9.7" fill="#fff" stroke="#ee7b7b" stroke-width="4"/>
<text x="198.3" y="553.5" font-size="20.5" fill="#555">95th</text>
<text x="1213" y="716.5" text-anchor="middle" font-size="21.5" fill="#575757">Time</text>
<text transform="translate(107,342) rotate(-90)" text-anchor="middle" font-size="22" fill="#575757">kBps</text>
</svg>
<div class="abs" style="left:2302px;top:343px;width:28px;height:28px;border:2px solid #1a1a1a;background:#fff"></div>
<div class="abs leg" style="left:2344px;top:338px">Select All</div>
<div class="abs dot" style="left:2304px;top:396px;background:#00c5e3"></div>
<div class="abs leg" style="left:2344px;top:389.7px">4000</div>
<div class="abs" style="left:2286px;top:440px;width:512px;height:50px;overflow:hidden">
 <div class="abs" style="left:6px;top:4px;width:500px;height:42px;background:#f7f7f7;filter:blur(6px)"></div>
 <div class="abs" style="left:16px;top:8px;width:30px;height:30px;background:#efefef;filter:blur(8px)"></div>
 <div class="abs" style="left:10px;top:-8px;width:40px;height:14px;background:#dff3f8;filter:blur(6px)"></div>
 <div class="abs" style="left:10px;top:42px;width:40px;height:14px;background:#d9e6f4;filter:blur(6px)"></div>
</div>
<div class="abs dot" style="left:2304px;top:496px;background:#5da5da"></div>
<div class="abs leg" style="left:2344px;top:491px">vmnic0</div>
<div class="abs dot" style="left:2304px;top:547px;background:#60bd68"></div>
<div class="abs leg" style="left:2344px;top:541px">vmnic1</div>
<div class="abs" style="left:720px;top:1014px;width:1440px;height:476px;border-left:2px solid #dcdcdc;border-top:2px solid #dcdcdc;border-bottom:2px solid #dcdcdc;box-sizing:content-box;overflow:hidden;width:1438px">
<div class="abs" style="left:0;top:0;width:1438px;height:84px;background:#f4f5f7;border-bottom:2px solid #dddddf"></div>
<div class="abs" style="left:0;top:168px;width:1438px;height:164px;background:#fffdf1"></div>
<div class="abs" style="left:0;top:414px;width:1438px;height:70px;background:#fafafa"></div>
</div>
<div class="abs" style="left:730.7px;top:1023px;line-height:40px;font-size:28px;font-weight:bold;color:#2b2b2b;white-space:nowrap;letter-spacing:-0.74px">Name</div>
<div class="abs" style="left:1031px;top:1023px;line-height:40px;font-size:28px;font-weight:bold;color:#2b2b2b;white-space:nowrap;letter-spacing:0.09px">Min</div>
<div class="abs" style="left:1318.5px;top:1023px;line-height:40px;font-size:28px;font-weight:bold;color:#2b2b2b;white-space:nowrap;letter-spacing:0.01px">Max</div>
<div class="abs" style="left:1606.6px;top:1023px;line-height:40px;font-size:28px;font-weight:bold;color:#2b2b2b;white-space:nowrap;letter-spacing:-1.49px">Avg</div>
<div class="abs" style="left:1895.3px;top:1023px;line-height:40px;font-size:28px;font-weight:bold;color:#2b2b2b;white-space:nowrap;letter-spacing:-0.50px">95th Percentile</div>
<div class="abs" style="left:746px;top:1124px;line-height:40px;font-size:26px;color:#2b2b2b;white-space:nowrap;letter-spacing:0.60px">4000</div>
<div class="abs" style="left:1034.5px;top:1124px;line-height:40px;font-size:26px;color:#2b2b2b;white-space:nowrap;letter-spacing:0.00px">13.0</div>
<div class="abs" style="left:1321.5px;top:1124px;line-height:40px;font-size:26px;color:#2b2b2b;white-space:nowrap;letter-spacing:0.00px">40.0</div>
<div class="abs" style="left:1610.5px;top:1124px;line-height:40px;font-size:26px;color:#2b2b2b;white-space:nowrap;letter-spacing:0.00px">17.12</div>
<div class="abs" style="left:1898.6px;top:1124px;line-height:40px;font-size:26px;color:#2b2b2b;white-space:nowrap;letter-spacing:0.00px">16.8</div>
<div class="abs" style="left:1034.5px;top:1205px;line-height:40px;font-size:26px;color:#2b2b2b;white-space:nowrap;letter-spacing:0.00px">13.0</div>
<div class="abs" style="left:1321.5px;top:1205px;line-height:40px;font-size:26px;color:#2b2b2b;white-space:nowrap;letter-spacing:0.00px">40.0</div>
<div class="abs" style="left:1610.5px;top:1205px;line-height:40px;font-size:26px;color:#2b2b2b;white-space:nowrap;letter-spacing:0.00px">17.12</div>
<div class="abs" style="left:1898.6px;top:1205px;line-height:40px;font-size:26px;color:#2b2b2b;white-space:nowrap;letter-spacing:0.00px">16.8</div>
<div class="abs" style="left:746px;top:1369px;line-height:40px;font-size:26px;color:#2b2b2b;white-space:nowrap;letter-spacing:0.00px">vmnic0</div>
<div class="abs" style="left:1034.5px;top:1369px;line-height:40px;font-size:26px;color:#2b2b2b;white-space:nowrap;letter-spacing:0.00px">2.0</div>
<div class="abs" style="left:1321.5px;top:1369px;line-height:40px;font-size:26px;color:#2b2b2b;white-space:nowrap;letter-spacing:0.00px">24.0</div>
<div class="abs" style="left:1610.5px;top:1369px;line-height:40px;font-size:26px;color:#2b2b2b;white-space:nowrap;letter-spacing:0.00px">4.33</div>
<div class="abs" style="left:1898.6px;top:1369px;line-height:40px;font-size:26px;color:#2b2b2b;white-space:nowrap;letter-spacing:0.00px">4.05</div>
<div class="abs" style="left:746px;top:1451px;line-height:40px;font-size:26px;color:#2b2b2b;white-space:nowrap;letter-spacing:0.00px">vmnic1</div>
<div class="abs" style="left:1034.5px;top:1451px;line-height:40px;font-size:26px;color:#2b2b2b;white-space:nowrap;letter-spacing:0.00px">0.0</div>
<div class="abs" style="left:1321.5px;top:1451px;line-height:40px;font-size:26px;color:#2b2b2b;white-space:nowrap;letter-spacing:0.00px">0.0</div>
<div class="abs" style="left:1610.5px;top:1451px;line-height:40px;font-size:26px;color:#2b2b2b;white-space:nowrap;letter-spacing:0.00px">0.0</div>
<div class="abs" style="left:1898.6px;top:1451px;line-height:40px;font-size:26px;color:#2b2b2b;white-space:nowrap;letter-spacing:0.00px">0.0</div>
<div class="abs" style="left:1905px;top:1059px;width:28px;height:28px;border:1px solid #dcdcdc;border-radius:50%;background:#f2f2f3;text-align:center;line-height:29px;font-size:19px;font-weight:bold;color:#111">?</div>
<div class="abs" style="left:743px;top:1211px;width:247px;height:121px;overflow:hidden">
 <div class="abs" style="left:-14px;top:-14px;width:78px;height:150px;background:#e4e2d8;filter:blur(13px)"></div>
 <div class="abs" style="left:8px;top:4px;width:46px;height:20px;background:#cfcdc4;filter:blur(9px)"></div>
 <div class="abs" style="left:14px;top:43px;width:216px;height:28px;background:#d3d1c8;filter:blur(10px)"></div>
 <div class="abs" style="left:22px;top:89px;width:54px;height:20px;background:#d2d0c7;filter:blur(9px)"></div>
</div>
<div class="abs" style="left:1895px;top:1241px;width:58px;height:36px;background:#4d4a48;box-shadow:0 6px 10px rgba(0,0,0,0.22);color:#fff;font-size:22.5px;-webkit-text-stroke:0.7px #fff;line-height:37px;text-align:center">16.8</div>
<div class="abs" style="left:2597px;top:1515px;width:77px;height:63px;background:#242424;border-top:7px solid #000;box-sizing:border-box"></div>
<div class="abs" style="left:2597px;top:1524px;width:77px;text-align:center;font-size:26px;font-weight:bold;color:#777;line-height:30px;letter-spacing:-0.9px">100%</div>
<div class="abs" style="left:2597px;top:1554px;width:77px;text-align:center;font-size:14px;color:#777;line-height:18px">Completed</div>
<div class="abs" style="left:2747px;top:1515px;width:77px;height:63px;background:#242424;border-top:7px solid #000;box-sizing:border-box"></div>
<div class="abs" style="left:2747px;top:1523px;width:77px;text-align:center;font-size:30px;font-weight:bold;color:#777;line-height:34px;letter-spacing:-1px">14</div>
<div class="abs" style="left:2747px;top:1554px;width:77px;text-align:center;font-size:16.5px;color:#777;line-height:20px">Alarms</div>
</body></html>
